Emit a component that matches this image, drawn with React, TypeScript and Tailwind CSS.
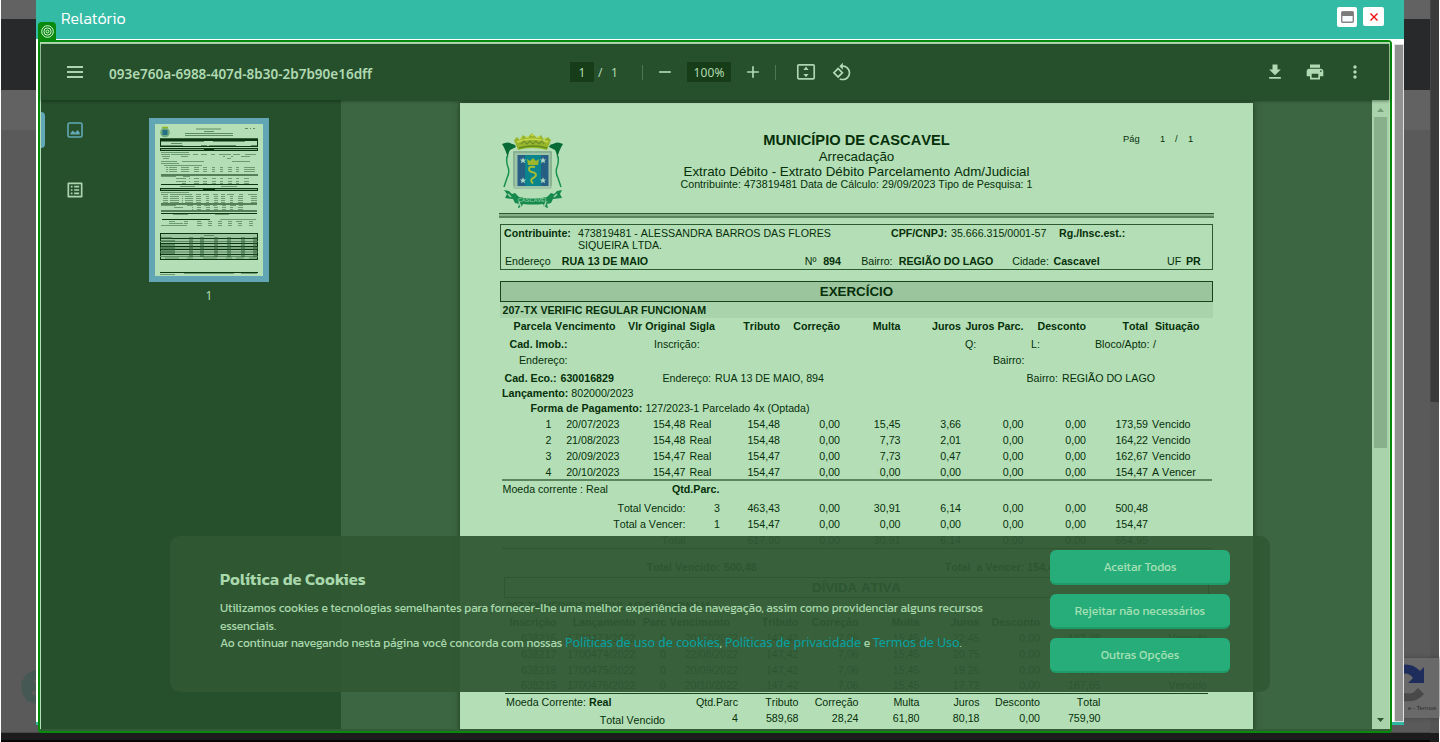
import type { ReactNode } from "react";
import { MdAdd, MdFileDownload, MdMoreVert, MdOutlineListAlt, MdPrint, MdRemove, MdRotate90DegreesCcw } from "react-icons/md";

const KANIT = "font-[Kanit,'Noto_Sans',sans-serif]";
const ARIAL = "font-['Liberation_Sans',Arial,sans-serif]";
const NOTO = "font-['Noto_Sans',sans-serif]";

type LineProps = { className?: string; children: ReactNode };

function Line({ className = "h-4 leading-4", children }: LineProps) {
  return <div className={`flex shrink-0 whitespace-pre ${className}`}>{children}</div>;
}

const debtGrid =
  "grid shrink-0 grid-cols-[51.5px_68px_66px_34.5px_60px_60px_60.5px_60.5px_62.5px_62.5px_62px_65px] h-4 leading-4 text-right whitespace-pre";
const activeGrid =
  "grid shrink-0 grid-cols-[56.5px_79px_30.5px_72px_60.5px_60px_61px_60px_60.5px_60.5px_106.5px] text-right whitespace-pre";

const installments = [
  ["1", "20/07/2023", "154,48", "Real", "154,48", "0,00", "15,45", "3,66", "0,00", "0,00", "173,59", "Vencido"],
  ["2", "21/08/2023", "154,48", "Real", "154,48", "0,00", "7,73", "2,01", "0,00", "0,00", "164,22", "Vencido"],
  ["3", "20/09/2023", "154,47", "Real", "154,47", "0,00", "7,73", "0,47", "0,00", "0,00", "162,67", "Vencido"],
  ["4", "20/10/2023", "154,47", "Real", "154,47", "0,00", "0,00", "0,00", "0,00", "0,00", "154,47", "A Vencer"],
];

const totals = [
  ["Total Vencido:", "3", "463,43", "0,00", "30,91", "6,14", "0,00", "0,00", "500,48"],
  ["Total a Vencer:", "1", "154,47", "0,00", "0,00", "0,00", "0,00", "0,00", "154,47"],
  ["Total", "", "617,90", "0,00", "30,91", "6,14", "0,00", "0,00", "654,95"],
];

const activeDebt = [
  ["638216", "1700473/2022", "0", "20/07/2022", "147,42", "7,06", "15,45", "22,45", "0,00", "192,38", "Vencido"],
  ["638217", "1700474/2022", "0", "22/08/2022", "147,42", "7,06", "15,45", "20,75", "0,00", "190,68", "Vencido"],
  ["638218", "1700475/2022", "0", "20/09/2022", "147,42", "7,06", "15,45", "19,26", "0,00", "189,19", "Vencido"],
  ["638219", "1700476/2022", "0", "20/10/2022", "147,42", "7,06", "15,45", "17,72", "0,00", "187,65", "Vencido"],
];

function Crest() {
  const star = "M0-3.2L1-1H3.2L1.4.5 2.1 2.8 0 1.4-2.1 2.8-1.4.5-3.2-1H-1z";
  return (
    <svg width="64" height="78" viewBox="0 0 64 78" className="block">
      <path d="M17 18L13 8l3-3 3 3 3-5 4 3 5-5 5 5 4-3 3 5 4-3 3 3-4 10q-15-4-29 0z" fill="#98b62c" />
      <path d="M16 10q15-6 31 0M19 6h2M25 5h3M30 3h3M36 5h3M43 6h2" stroke="#c9d94e" strokeWidth="1.500" fill="none" />
      <path d="M20 12l3-3 3 3 3-3 3 3 3-3 3 3 3-3 2 3" stroke="#6d8f2a" strokeWidth="1.200" fill="none" />
      <path d="M18 16q14-4 28 0" stroke="#5f8a1c" strokeWidth="1.400" fill="none" />
      <path d="M1 12q6-3 10 0 3 0 4 3l-6 3q-2 3-2 9-2-9-6-15zM62 12q-6-3-10 0-3 0-4 3l6 3q2 3 2 9 2-9 6-15z" fill="#066b35" />
      <path d="M6 24q-1 6 1 11 2 5-1 11l-3 9M57 24q1 6-1 11-2 5 1 11l3 9" stroke="#1b9150" strokeWidth="1.500" fill="none" />
      <rect x="12" y="19" width="39" height="38" rx="2" fill="#9fc5a8" />
      <path d="M13 54V20H50V54" stroke="#80ab8a" strokeWidth="1.400" fill="none" />
      <rect x="16.500" y="23" width="31" height="31" fill="#265f83" />
      <rect x="24" y="23" width="16" height="31" fill="#0a858d" />
      <g fill="#a9d6c2">
        <path d={star} transform="translate(22 28.500)" />
        <path d={star} transform="translate(42 28.500)" />
        <path d={star} transform="translate(22 48.500)" />
        <path d={star} transform="translate(42 48.500)" />
      </g>
      <path d="M27 33l-1-6 3 2 3-3 3 3 3-2-1 6z" fill="#9fb62b" />
      <path d="M34 35q-6-1-6 2t5 3.500q4 2.500 0 5-5 2-1 6" stroke="#a9bd30" strokeWidth="2" fill="none" />
      <path d="M3 58l5 1 3 3 3-1 4 4q14 3 28 0l4-4 3 1 3-3 5-1-2 4 2 4-9 1-2 4-4 1 1 4q-4-1-5-4-10 1-20 0-1 3-5 4l1-4-4-1-2-4-8-1 2-4z" fill="#158a4c" />
      <path d="M7 62l3 3M56 62l-3 3M18 70l2 5M45 70l-2 5" stroke="#9fd0a8" strokeWidth="1.600" fill="none" />
      <text x="32" y="69.500" textAnchor="middle" fontSize="5.500" fontWeight="700" fill="#7fc795" fontFamily="Liberation Sans">CASCAVEL</text>
    </svg>
  );
}

function Report() {
  return (
    <div className={`flex h-[1122px] w-[793px] shrink-0 flex-col bg-[#b4deb6] pl-10 text-[10.67px] text-[#06300a] shadow-[0_0_6px_rgba(0,30,5,0.6)] [font-kerning:none] ${ARIAL}`}>
      <div className="grid h-[110px] shrink-0 grid-cols-[140px_433px_180px] pt-[29px]">
        <div className="pl-px">
          <Crest />
        </div>
        <div className="flex flex-col items-center whitespace-nowrap text-[13.33px]">
          <div className="h-4 text-[14.67px] font-bold leading-4">MUNICÍPIO DE CASCAVEL</div>
          <div className="h-4 leading-[17px]">Arrecadação</div>
          <div className="h-[14px] leading-[15px]">Extrato Débito - Extrato Débito Parcelamento Adm/Judicial</div>
          <div className="text-[10.67px] leading-3">Contribuinte: 473819481 Data de Cálculo: 29/09/2023 Tipo de Pesquisa: 1</div>
        </div>
        <div className="flex h-[14px] pl-[50px] text-[9.33px] leading-[14px]">
          <span className="w-[37px]">Pág</span>
          <span className="w-[15px]">1</span>
          <span className="w-[13px]">/</span>
          <span>1</span>
        </div>
      </div>
      <div className="-ml-px h-[5px] w-[715px] shrink-0 border-b-2 border-t border-b-[#5b855e] border-t-[#2b5730] bg-[#84b088]" />

      <div className="mt-1.5 flex h-[46px] w-[713px] shrink-0 flex-col border border-[#2b5a30]">
        <Line className="h-[29px] pl-[3px] pt-0.5 leading-3">
          <b className="w-[74px]">Contribuinte:</b>
          <span className="w-[313px]">{"473819481 - ALESSANDRA BARROS DAS FLORES\nSIQUEIRA LTDA."}</span>
          <b className="w-[60px]">CPF/CNPJ:</b>
          <span className="w-[108px]">35.666.315/0001-57</span>
          <b>Rg./Insc.est.:</b>
        </Line>
        <Line className="h-3.5 pl-1 leading-[14px]">
          <span className="w-[56.7px]">Endereço</span>
          <b className="w-[243px]">RUA 13 DE MAIO</b>
          <span className="w-[18.5px]">Nº</span>
          <b className="w-[38px]">894</b>
          <span className="w-[37.5px]">Bairro:</span>
          <b className="w-[113.5px]">REGIÃO DO LAGO</b>
          <span className="w-[41.3px]">Cidade:</span>
          <b className="w-[113.5px]">Cascavel</b>
          <span className="w-[19px]">UF</span>
          <b>PR</b>
        </Line>
      </div>

      <div className="mt-[11px] h-[21px] w-[713px] shrink-0 border border-[#16451c] bg-[#9bc59d] text-center text-[13.33px] font-bold leading-[20px]">EXERCÍCIO</div>
      <div className="h-4 w-[713px] shrink-0 bg-[#a9d3ab] pl-[2.5px] font-bold leading-4">207-TX VERIFIC REGULAR FUNCIONAM</div>
      <div className={`${debtGrid} font-bold`}>
        <span>Parcela</span>
        <span className="pr-1">Vencimento</span>
        <span>Vlr Original</span>
        <span className="pl-1 text-left">Sigla</span>
        <span>Tributo</span>
        <span>Correção</span>
        <span>Multa</span>
        <span>Juros</span>
        <span>Juros Parc.</span>
        <span>Desconto</span>
        <span>Total</span>
        <span className="pl-[7px] text-left">Situação</span>
      </div>
      <Line className="mt-0.5 h-4 pl-[9.5px] leading-4">
        <b className="w-[144.5px]">Cad. Imob.:</b>
        <span className="w-[311px]">Inscrição:</span>
        <span className="w-[66px]">Q:</span>
        <span className="w-16">L:</span>
        <span className="w-[58px]">Bloco/Apto:</span>
        <span>/</span>
      </Line>
      <Line className="h-4 pl-[19px] leading-4">
        <span className="w-[474px]">Endereço:</span>
        <span>Bairro:</span>
      </Line>
      <Line className="mt-0.5 h-4 pl-[4.5px] leading-4">
        <b className="w-14">Cad. Eco.:</b>
        <b className="w-[102px]">630016829</b>
        <span className="w-[52.5px]">Endereço:</span>
        <span className="w-[311.5px]">RUA 13 DE MAIO, 894</span>
        <span className="w-[35.5px]">Bairro:</span>
        <span>REGIÃO DO LAGO</span>
      </Line>
      <Line className="h-[15px] pl-0.5 leading-[15px]">
        <b>Lançamento: </b>
        <span>802000/2023</span>
      </Line>
      <Line className="h-[15px] pl-[30.5px] leading-[15px]">
        <b>Forma de Pagamento: </b>
        <span>127/2023-1 Parcelado 4x (Optada)</span>
      </Line>
      {installments.map((row) => (
        <div key={row[0]} className={debtGrid}>
          {row.map((v, i) => (
            <span key={i} className={i === 3 || i === 11 ? "pl-1 text-left" : ""}>{v}</span>
          ))}
        </div>
      ))}
      <div className="-mt-px ml-[1.5px] h-0.5 w-[710px] shrink-0 bg-[#5b855e]" />
      <Line className="h-[17px] pl-[2.5px] leading-[17px]">
        <span className="w-[169.5px]">Moeda corrente : Real</span>
        <b>Qtd.Parc.</b>
      </Line>
      <div className="mt-0.5 flex shrink-0 flex-col">
        {totals.map((row) => (
          <div key={row[0]} className={debtGrid}>
            {row.map((v, i) => (
              <span key={i} className={i === 0 ? "col-span-3" : ""}>{v}</span>
            ))}
          </div>
        ))}
      </div>
      <div className="ml-[1.5px] h-px w-[710px] shrink-0 bg-[#16451c]" />
      <Line className="mt-2.5 h-4 pl-[146.5px] font-bold leading-4">
        <span className="w-[77.5px]">Total Vencido:</span>
        <span className="w-[221px]">500,48</span>
        <span>{"Total  a Vencer: 154,47"}</span>
      </Line>
      <div className="ml-1 mt-0.5 h-[21px] w-[705px] shrink-0 border border-[#16451c] text-center text-[13.33px] font-bold leading-[20px]">DÍVIDA ATIVA</div>
      <div className="h-4 shrink-0 pl-1.5 font-bold leading-4">207-TX VERIFIC REGULAR FUNCIONAM</div>
      <div className={`${activeGrid} h-4 font-bold leading-4`}>
        <span>Inscrição</span>
        <span>Lançamento</span>
        <span>Parc</span>
        <span className="pr-2">Vencimento</span>
        <span>Tributo</span>
        <span>Correção</span>
        <span>Multa</span>
        <span>Juros</span>
        <span>Desconto</span>
        <span />
        <span />
      </div>
      {activeDebt.map((row) => (
        <div key={row[0]} className={`${activeGrid} h-[15.75px] leading-4`}>
          {row.map((v, i) => (
            <span key={i}>{v}</span>
          ))}
        </div>
      ))}
      <div className="ml-[5px] h-px w-[703px] shrink-0 bg-[#16451c]" />
      <div className={`${activeGrid} h-4 leading-[17px]`}>
        <span className="col-span-3 pl-1.5 text-left">Moeda Corrente: <b>Real</b></span>
        <span>Qtd.Parc</span>
        <span>Tributo</span>
        <span>Correção</span>
        <span>Multa</span>
        <span>Juros</span>
        <span>Desconto</span>
        <span>Total</span>
      </div>
      <div className={`${activeGrid} h-4 leading-4`}>
        <span className="col-span-3 pr-px pt-0.5">Total Vencido</span>
        <span>4</span>
        <span>589,68</span>
        <span>28,24</span>
        <span>61,80</span>
        <span>80,18</span>
        <span>0,00</span>
        <span>759,90</span>
      </div>
    </div>
  );
}

const thumbRows: [number, string][] = [
  [28.5, "6 28"],
  [30.5, "6 9 16 9 24 11 38 5 46 6 56 4 64 12 78 7 90 11"],
  [32.5, "7 8 26 7 68 2 76 2 86 9"],
  [34.5, "8 6 72 4"],
  [37.5, "6 16 27 22 77 18"],
  [39.5, "6 18"],
  [41.5, "9 38"],
  [43.5, "11 2 14 8 26 8 39 5 48 4 57 3 65 3 73 4 81 3 89 11"],
  [45.5, "11 2 14 8 26 8 39 5 48 4 57 3 65 3 73 4 81 3 89 11"],
  [47.5, "11 2 14 8 26 8 39 5 48 4 57 3 65 3 73 4 81 3 89 11"],
  [52.5, "6 15 28 7"],
  [54.5, "21 10 34 1 39 5 48 4 57 4 65 3 73 4 81 3 89 5"],
  [57.5, "21 10 34 1 39 5 48 4 57 4 65 3 73 4 81 3 89 5"],
  [59.5, "27 4 39 5 48 4 57 4 65 3 73 4 81 3 89 5"],
  [62.5, "25 15 66 16"],
  [68.5, "6 28"],
  [70.5, "6 7 15 22 41 5 48 6 58 5 66 4 72 7 84 4 93 9"],
  [72.5, "8 5 15 9 27 1 30 8 41 5 51 3 59 4 66 4 75 3 83 5 96 6"],
  [74.5, "8 5 15 9 27 1 30 8 41 5 51 3 59 4 66 4 75 3 83 5 96 6"],
  [76.5, "8 5 15 9 27 1 30 8 41 5 51 3 59 4 66 4 75 3 83 5 96 6"],
  [78.5, "8 5 15 9 27 1 30 8 41 5 51 3 59 4 66 4 75 3 83 5 96 6"],
  [81.5, "6 15 32 6 42 4 49 6 58 4 67 4 75 6 84 4"],
  [83.5, "19 9 37 1 42 4 51 4 59 4 67 4 75 3 83 5"],
  [85.5, "37 1 42 4 51 4 59 4 67 4 75 3 83 5"],
  [90.5, "18 15 60 14"],
  [95.5, "65 36"],
  [97.5, "14 6 29 4 42 4 53 4 63 4 73 4 81 6 94 4"],
  [99.5, "14 14 29 4 42 5 53 4 63 4 73 4 83 4 94 4"],
  [101.5, "6 26 42 5 53 4 63 4 73 4 83 4 94 4"],
];

function Thumbnail() {
  const dashes = thumbRows.map(([y, spec]) => {
    const n = spec.split(" ").map(Number);
    let d = "";
    for (let i = 0; i < n.length; i += 2) d += `M${n[i]} ${y}h${n[i + 1]}`;
    return d;
  });
  return (
    <svg width="108" height="152" viewBox="0 0 108 152" className="block bg-[#b4deb6]">
      <circle cx="10" cy="8.500" r="4.800" fill="#6fa87f" />
      <rect x="7.500" y="6" width="5" height="5" fill="#247084" />
      <path d="M7 3.500h6" stroke="#93b422" strokeWidth="1.500" />
      <path d="M41 5h25M49 7.500h10M30 9.500h48M30 11.500h48M90 4.500h3M95 4.500h1M98 4.500h2" stroke="#5d8c61" />
      <path d="M5 15.200h98" stroke="#0a3510" strokeWidth="2" />
      <rect x="5.500" y="16.500" width="97" height="6" fill="none" stroke="#0a3510" />
      <path d="M6 17.500h43M58 17.500h32M16 19.500h11M6 21.500h22M46 21.500h6M54 21.500h27M96 21.500h6" stroke="#5d8c61" />
      <rect x="5.500" y="24.500" width="97" height="2" fill="#83ad86" stroke="#0a3510" />
      <path d="M49 25.500h10" stroke="#0a3510" />
      <path d={dashes.join("")} stroke="#6c9b70" strokeWidth="1" />
      <path d="M6 51h97M6 80h96M6 87h96" stroke="#557f58" strokeWidth="2" />
      <path d="M6 60.500h97M6 89.500h96M7 95.500h48M5 148.500h98" stroke="#0a3510" />
      <rect x="5.500" y="64.500" width="97" height="2" fill="#83ad86" stroke="#0a3510" />
      <path d="M48 65.500h12" stroke="#0a3510" />
      <rect x="5.500" y="109.500" width="97" height="26" fill="#9cc69f" stroke="#0a3510" />
      <path d="M5 114.500h98M5 119.500h98M5 122.500h98M5 125.500h98M5 130.500h98" stroke="#0a3510" />
      <path d="M5 117.500h98M5 124h98M5 128h98M5 132.500h98" stroke="#5d8c61" />
      <path d="M6 113h11v2h-11zM6 116h14v2h-14zM6 120h14v10h-14zM34 113h4v20h-4zM45 113h4v20h-4zM59 113h4v20h-4zM72 113h4v20h-4zM86 113h4v20h-4zM98 113h4v20h-4z" fill="#2c5b31" opacity=".5" />
      <path d="M10 134h14M32 134h6M48 134h14M71 134h6M81 134h8M94 134h8M49 111.500h10" stroke="#5d8c61" />
      <path d="M5 150.500h15M29 149.500h50M86 149.500h16" stroke="#6c9b70" />
    </svg>
  );
}

function Toolbar() {
  return (
    <div className={`relative z-10 flex h-14 shrink-0 items-center bg-[#264f2c] text-[#b0dab2] shadow-[0_1px_3px_rgba(0,25,5,0.5)] ${NOTO}`}>
      <div className="flex w-[529px] items-center pl-[26px]">
        <svg width="16" height="12" viewBox="0 0 16 12" className="block">
          <path d="M0 1h16M0 6h16M0 11h16" stroke="#acd5ae" strokeWidth="2" />
        </svg>
        <span className="pl-[26px] pt-[3px] text-[13.5px] font-semibold leading-5">093e760a-6988-407d-8b30-2b7b90e16dff</span>
      </div>
      <div className="flex items-center text-[12px] leading-[21px]">
        <span className="h-5 w-6 bg-[#163d18] text-center">1</span>
        <span className="w-[17px] pl-[4px]">/</span>
        <span className="w-[31px]">1</span>
        <span className="h-[15px] w-px bg-[#4c7551]" />
        <MdRemove size={20} className="ml-3" />
        <span className="ml-3 h-5 w-11 bg-[#163d18] text-center tracking-[0.15px]">100%</span>
        <MdAdd size={20} className="ml-3" />
        <span className="ml-3 h-[15px] w-px bg-[#4c7551]" />
        <svg width="20" height="18" viewBox="0 0 20 18" className="ml-5 block" fill="#acd5ae">
          <rect x="1.800" y="1.800" width="16.400" height="14" rx="1" fill="none" stroke="#acd5ae" strokeWidth="1.700" />
          <path d="M10 3.600l2.600 3.300H7.400zM10 14.200l2.600-3.300H7.400z" />
        </svg>
        <MdRotate90DegreesCcw size={20} className="ml-4" />
      </div>
      <div className="ml-auto flex items-center gap-5 pr-6">
        <MdFileDownload size={20} />
        <MdPrint size={20} />
        <MdMoreVert size={20} />
      </div>
    </div>
  );
}

function Viewer() {
  return (
    <div className="flex h-[685px] flex-col">
      <Toolbar />
      <div className="flex min-h-0 flex-1">
        <div className="flex w-[300px] shrink-0 bg-[#264f2c]">
          <div className="flex w-[108px] flex-col">
            <div className="mt-3 flex h-9 items-center">
              <span className="h-9 w-1 rounded-r bg-[#62a8b6]" />
              <svg width="16" height="16" viewBox="0 0 16 16" className="ml-[22px] block">
                <rect x="1" y="1" width="14" height="14" rx="1.500" fill="none" stroke="#62a8b6" strokeWidth="1.600" />
                <path d="M3.500 12.500V11l2.300-2.500L8 10.800 10.800 8l2 3v1.500z" fill="#62a8b6" />
              </svg>
            </div>
            <MdOutlineListAlt size={20} className="ml-6 mt-8 text-[#acd5ae]" />
          </div>
          <div className="flex flex-col items-center pt-[18px]">
            <div className="h-[164px] w-[120px] border-6 border-[#62a5b4]">
              <Thumbnail />
            </div>
            <span className={`pt-1 text-[12px] leading-5 text-[#b0dab2] ${NOTO}`}>1</span>
          </div>
        </div>
        <div className="flex min-w-0 flex-1 overflow-hidden bg-[#3c6641] pl-[119px] pt-[3px]">
          <Report />
        </div>
        <div className="flex w-[17px] shrink-0 flex-col items-center bg-[#a9d3ab]">
          <div className="flex h-[17px] items-center pt-0.5">
            <svg width="7" height="4" viewBox="0 0 7 4"><path d="M0 4L3.500 0 7 4z" fill="#719c75" /></svg>
          </div>
          <div className="h-[331px] w-[13px] bg-[#88b18b]" />
          <svg width="7" height="4" viewBox="0 0 7 4" className="mb-[7px] mt-auto"><path d="M0 0L3.500 4 7 0z" fill="#2b5730" /></svg>
        </div>
      </div>
    </div>
  );
}

function Backdrop() {
  return (
    <div className="flex h-full bg-white">
      <div className="relative ml-px flex w-[1429px] flex-col">
        <div className="h-[19px] bg-[#626262]" />
        <div className="h-[71px] bg-[#28292b]" />
        <div className="h-10 bg-[#626262]" />
        <div className="flex-1 bg-[#5a5a5a]" />
        <div className="h-2 border-t border-[#484848] bg-[#1c1c1c]" />
        <div className="h-0.5 bg-[#050505]" />
        <svg width="36" height="36" viewBox="0 0 36 36" className="absolute left-5 top-[669px]">
          <path d="M14 1l6-1 14 8 2 10-6 14-12 4-12-4L1 24 0 14 5 5z" fill="#455853" />
          <circle cx="15" cy="12" r="2.500" fill="#5a5a5a" />
          <circle cx="13" cy="24" r="2.500" fill="#5a5a5a" />
        </svg>
      </div>
      <div className="flex w-[9px] flex-col bg-[#555555]">
        <div className="h-[402px] border-l border-[#484848] bg-[#3b3b3b]" />
        <div className="flex-1" />
        <div className="h-[9px] bg-[#1c1c1c]" />
      </div>
      <div className="absolute left-[1390px] top-[658px] flex h-[60px] w-[49px] flex-col bg-[#696969] shadow-[0_0_4px_#444444]">
        <svg width="49" height="45" viewBox="0 0 49 45">
          <path d="M12 7q10-2 18 6l4-4v16H18l5-5q-4-6-11-4z" fill="#1f2d5c" />
          <path d="M12 34q8 3 12 0l4-4 6 6q-7 9-22 7z" fill="#494949" />
        </svg>
        <span className={`pl-[18px] text-[6px] leading-[10px] text-[#2a2a2a] ${ARIAL}`}>e - Termos</span>
      </div>
    </div>
  );
}

function CookieBanner() {
  const button = "flex h-[35px] w-[180px] items-center justify-center rounded-[6px] border-b-2 border-[#1f9b69] bg-[#26ad79] pt-px text-[12px] text-[#a5e0b4]";
  return (
    <div className={`absolute left-[170px] top-[536px] flex h-[156px] w-[1100px] justify-between rounded-[10px] bg-[#305833]/94 pl-[50px] pr-10 text-[#a8d8ab] ${KANIT}`}>
      <div className="w-[800px] pt-8">
        <h2 className="text-[16.5px] font-semibold leading-6 tracking-[0.05px]">Política de Cookies</h2>
        <p className="mt-2 whitespace-nowrap text-[12px] leading-[17.5px] tracking-[-0.1px]">
          Utilizamos cookies e tecnologias semelhantes para fornecer-lhe uma melhor experiência de navegação, assim como providenciar alguns recursos<br />
          essenciais.<br />
          Ao continuar navegando nesta página você concorda com nossas{" "}
          <a className={`text-[12.6px] leading-none text-[#06a3a4] ${NOTO}`}>Políticas de uso de cookies</a>,{" "}
          <a className={`text-[12.6px] leading-none text-[#06a3a4] ${NOTO}`}>Políticas de privacidade</a> e{" "}
          <a className={`text-[12.6px] leading-none text-[#06a3a4] ${NOTO}`}>Termos de Uso</a>.
        </p>
      </div>
      <div className="flex flex-col gap-[9px] pt-3.5">
        <button className={button}>Aceitar Todos</button>
        <button className={button}>Rejeitar não necessários</button>
        <button className={button}>Outras Opções</button>
      </div>
    </div>
  );
}

export default function App() {
  return (
    <div className="relative h-[742px] w-[1440px] overflow-hidden">
      <Backdrop />
      <div className="absolute left-9 top-0 flex h-[725px] w-[1368px] flex-col border-b-[3px] border-[#2fb7a2] bg-white">
        <div className={`flex h-[39px] shrink-0 items-start bg-[#34bba6] pl-[25px] pr-5 pt-[7px] text-white ${KANIT}`}>
          <h1 className="text-[16px] font-light leading-[23px]">Relatório</h1>
          <div className="ml-auto flex items-start gap-1.5">
            <button className="flex h-5 w-5 items-center justify-center rounded-xs bg-white">
              <svg width="13" height="12" viewBox="0 0 13 12">
                <rect x=".700" y=".700" width="11.600" height="10.600" rx="1" fill="#f7fbff" stroke="#868686" strokeWidth="1.400" />
                <path d="M1 1h11v4H1z" fill="#7b7b7b" />
              </svg>
            </button>
            <button className="flex h-[19px] w-[21px] items-center justify-center rounded-xs bg-white">
              <svg width="8" height="8" viewBox="0 0 8 8"><path d="M.500.500l7 7M7.500.500l-7 7" stroke="#f00707" strokeWidth="1.300" /></svg>
            </button>
          </div>
        </div>
        <div className="ml-auto mt-[5px] w-[10px] flex-1 border border-[#e0e0e0] bg-[#919191]" />
      </div>
      <div className="absolute left-[38px] top-10 h-[693px] w-[1354px] rounded-b-[4px] rounded-tr-[4px] border-2 border-[#058a0b] bg-[#345a38]">
        <div className="h-[687px] bg-[#b4deb6] pl-px pr-px pt-0.5">
          <Viewer />
        </div>
      </div>
      <div className="absolute left-[38px] top-[22px] flex h-[18px] w-[18px] items-center justify-center rounded-t-[4px] bg-[#058a0b]">
        <svg width="13" height="13" viewBox="0 0 13 13" fill="none" stroke="#e4f5e4">
          <circle cx="6.500" cy="6.500" r="5.800" />
          <circle cx="6.500" cy="6.500" r="3.600" />
          <circle cx="6.500" cy="6.500" r="1.400" />
        </svg>
      </div>
      <CookieBanner />
    </div>
  );
}
